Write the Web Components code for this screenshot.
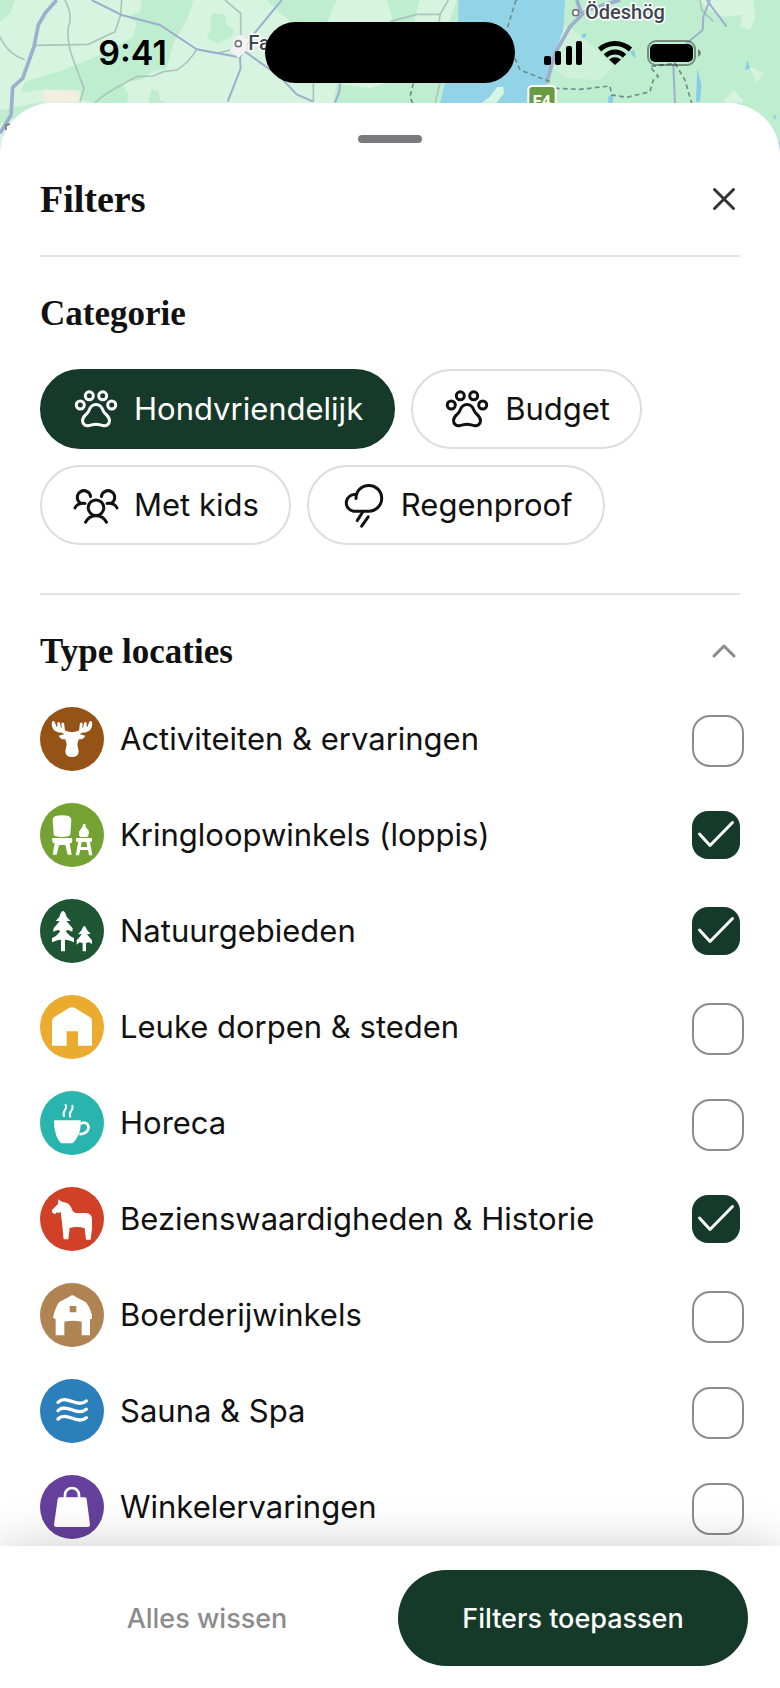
<!DOCTYPE html>
<html lang="nl">
<head>
<meta charset="utf-8">
<meta name="viewport" content="width=device-width, initial-scale=1">
<title>Filters</title>
<style>
    :root {
        --primary: #153a29;
        --text: #111;
        --muted: #8c8c8c;
        --line: #e4e4e4;
        --content-font: Inter, "Liberation Sans", sans-serif;
        --title-font: "Liberation Serif", serif;
    }
    body {
        margin: 0;
        font-family: var(--content-font);
        color: var(--text);
        background: #fff;
    }
</style>
</head>
<body>
<filter-screen></filter-screen>

<script>
const CHIP_ICONS = {
    paw: `<circle cx="17.3" cy="10.8" r="4"/><circle cx="30.7" cy="10.8" r="4"/>
        <circle cx="8.3" cy="20" r="4"/><circle cx="39.7" cy="20" r="4"/>
        <path d="M24 19.5C19.5 19.5 17.9 22.5 16.7 26C15.6 29.2 10.5 30.8 10.5 35.6C10.5 39.3 13.6 41.2 17 40.5C20 39.8 22 39.2 24 39.2C26 39.2 28 39.8 31 40.5C34.4 41.2 37.5 39.3 37.5 35.6C37.5 30.8 32.4 29.2 31.3 26C30.1 22.5 28.5 19.5 24 19.5Z"/>`,
    kids: `<circle cx="24" cy="26.7" r="7.8"/>
        <path d="M13.5 41.2C15.5 37.3 19.4 34.8 24 34.8C28.6 34.8 32.5 37.3 34.5 41.2"/>
        <path d="M18.6 15.5A6.7 6.7 0 1 0 8.3 22"/><path d="M13 22.4C8 22 4.5 23.6 3 27"/>
        <path d="M29.4 15.5A6.7 6.7 0 1 1 39.7 22"/><path d="M35 22.4C40 22 43.5 23.6 45 27"/>`,
    rain: `<path d="M17 17.5C17 9.5 23 4.4 29.8 4.4A12.8 12.8 0 0 1 29.8 30.2H14.4A8.4 8.4 0 1 1 17 13.6"/>
        <path d="M23.4 31.5L18.2 39.6"/><path d="M29.2 35.8L22.6 45.2"/>`
};

const PLACE_ICONS = {
    moose: `<path d="M36 45Q40 40 44 44L49 58Q51 62 52 57L52 48Q56 42 60 48L63 62Q65 66 65 60L64 50Q68 43 72 49L74 62Q73 69 78 72Q88 75 96 75Q104 75 114 72Q119 69 118 62L120 49Q124 43 128 50L127 60Q127 66 129 62L132 48Q136 42 140 48L140 57Q141 62 143 58L148 44Q152 40 156 45Q159 62 148 71Q139 77 127 77L119 81Q128 84 136 86Q131 98 116 97L112 112Q113 122 116 131Q116 150 96 150Q76 150 76 131Q79 122 80 112L76 97Q61 98 56 86Q64 84 73 81L65 77Q53 77 44 71Q33 62 36 45Z"/>`,
    chair: `<path d="M38 50Q38 37 66 37Q94 37 94 50L91 94Q90 102 66 102Q42 102 41 94Z"/>
        <path d="M38 105H95Q98 106 96 119L89 121L95 155H83L76 126H57L50 155H38L44 121L38 119Q34 107 38 105Z"/>
        <path d="M130 62L137 64L137 72Q147 80 147 89Q146 98 142 102H121Q114 95 117 86Q122 78 127 72Z"/>
        <path fill-rule="evenodd" d="M108 105H156V116H150L157 157H147L144 141H121L117 157H107L115 116H108ZM125 117L123 132H142L139 117Z"/>`,
    trees: `<path d="M69 36Q76 38 80 54L92 66L79 66L98 88L97 98L84 93L77 96Q88 112 102 117V130L86 124L75 122V157H63V122L52 124L36 130V117Q50 112 61 96L54 93L39 98L41 88L59 66L47 66L58 54Q62 38 69 36Z"/>
        <path d="M133 80Q138 83 141 93L152 105L141 105Q148 116 156 124V135L147 130L138 132V157H128V132L119 130L110 137V124Q119 116 125 105L114 106L125 93Q128 83 133 80Z"/>`,
    house: `<path d="M36 152V78Q36 72 42 67L87 39Q96 34 105 39L150 67Q156 71 156 78V152H114V109H80V152Z"/>`,
    cup: `<path d="M44 88H122Q124 114 114 135Q107 149 98 157H63Q54 147 49 134Q41 112 42 90Z"/>
        <path fill="none" stroke="#fff" stroke-width="8" d="M121 99Q132 91 142 99Q151 112 138 124Q131 130 118 129"/>
        <path fill="none" stroke="#fff" stroke-width="6" stroke-linecap="round" d="M77 42C84 56 64 60 72 75M97 44C103 58 83 62 91 77"/>`,
    horse: `<path d="M55 37L66 44Q88 46 94 62Q98 76 108 78H138Q155 79 156 96V125L152 158H138L134 124Q112 116 89 123L85 157H71L65 98L62 74Q56 80 50 76L45 82L37 77L36 69L54 51Z"/>`,
    barn: `<path fill-rule="evenodd" d="M97 37Q101 37 106 41L138 58Q151 74 156 96V107L150 109V157H125V116Q98 110 73 116V157H47V109L39 104Q46 74 57 58L88 41Q93 37 97 37ZM89 69V88H109V69Z"/>`,
    waves: `<path fill="none" stroke="#fff" stroke-width="10" stroke-linecap="round" d="M54 70C66 58 80 62 95 67C111 74 128 75 139 66M54 95C66 83 80 87 95 92C111 99 128 100 139 91M54 120C66 108 80 112 95 117C111 124 128 125 139 116"/>`,
    bag: `<path d="M59 67H134Q140 67 140 73L150 149Q150 156 143 156H49Q42 156 42 149L53 73Q53 67 59 67Z"/>
        <path fill="none" stroke="#fff" stroke-width="8" d="M75 70V60A21 21 0 0 1 117 60V70"/>`
};

class AreaMap extends HTMLElement {
    constructor() {
        super();
        this.attachShadow({ mode: 'open' });
    }

    connectedCallback() {
        this.shadowRoot.innerHTML = `
            <style>
                :host {
                    display: block;
                    overflow: hidden;
                    background: #bfedcf;
                }
                svg {
                    display: block;
                    width: 100%;
                    height: 100%;
                }
                text {
                    font-family: Roboto, sans-serif;
                    font-weight: 500;
                    font-size: 60px;
                    fill: #3f4650;
                    stroke: #fff;
                    stroke-width: 9px;
                    paint-order: stroke;
                }
                .shield {
                    font-size: 48px;
                    font-weight: 700;
                    fill: #fff;
                    stroke: none;
                }
                .road {
                    fill: none;
                    stroke: #9dafcc;
                    stroke-width: 6px;
                }
                .main {
                    stroke-width: 11px;
                }
                .minor {
                    fill: none;
                    stroke: #a9c5bd;
                    stroke-width: 5px;
                }
                .border {
                    fill: none;
                    stroke: #6f8f86;
                    stroke-width: 5px;
                    stroke-dasharray: 14 10;
                }
            </style>
            <svg viewBox="0 0 2340 480" preserveAspectRatio="xMidYMin slice" aria-hidden="true">
                <path fill="#d6f4e0" d="M0 0H1370L1320 150L1290 320L0 480Z"/>
                <g fill="#bfedcf">
                    <path d="M425 0H580L565 50L520 130L500 205L455 215L425 240L365 245L385 285L380 310H290L245 300L240 270L130 268L60 278L75 245L190 210L300 165L400 110L410 70L385 50L420 35Z"/>
                    <path d="M455 265L475 275L480 300L500 310H445Z"/>
                    <path d="M640 38L675 45L680 75L705 90L695 110L650 130L620 115L635 85L630 60Z"/>
                    <path d="M0 0H45L30 40L0 65Z"/>
                    <path d="M0 330L130 305L60 350L0 370Z"/>
                    <path d="M800 0H1010L980 70H880L840 40Z"/>
                    <path d="M1010 250L1110 265L1170 245L1310 250L1300 310H1000Z"/>
                    <path d="M1160 0L1260 0L1240 70L1180 65Z"/>
                </g>
                <path fill="#f2eee0" d="M135 270L230 272L240 305L150 308L128 300Z"/>
                <path fill="#cdf2d9" d="M1690 75L1720 90L1790 150L1840 200L1800 240L1700 235L1650 200Z"/>
                <path fill="#d6f4e0" d="M2100 0H2340V0L2260 0L2265 55L2250 90L2220 80L2225 45L2170 50L2130 30ZM2250 200L2290 220L2270 250ZM2170 305L2200 270L2230 300L2210 330Z"/>
                <path fill="#92d3e8" d="M1375 0H1695L1690 90L1660 170L1640 250L1590 310H1320L1340 230L1350 130L1375 60Z"/>
                <path fill="#d6f4e0" d="M1510 260L1490 262L1470 290L1445 308H1490L1512 280Z"/>
                <g fill="#86cbe8">
                    <path d="M1745 105L1758 98V110L1748 115ZM1890 155L1902 150L1908 175L1896 165ZM2092 205L2104 255L2100 305H2088ZM2235 210L2242 180L2250 205ZM1825 290L1840 280L1838 310H1825ZM2210 305L2260 335L2340 430V450L2290 375ZM2320 350L2330 343L2324 360Z"/>
                </g>
                <path class="minor" d="M195 0Q220 50 205 80Q200 130 220 180L252 265L240 305M365 0L362 45L345 95L265 133L105 136M0 110Q20 160 75 180M285 308Q320 275 410 230L460 228L490 215L530 210Q565 190 590 148M675 0L722 40V105M690 150L650 160L600 150M940 250V305M2100 0L2105 30L2140 65M1170 65L1250 43H1320L1345 0M1320 43L1315 90M1320 250L1305 310"/>
                <path class="road" d="M275 0L365 45L480 75L590 148L720 172L742 130L765 98L845 0M720 172L722 205L683 305M735 155L840 230L890 283L940 305M1020 250L1018 275L1005 308M2025 310L2020 195L2060 130L2108 90L2110 50L2130 0M2120 0L2180 80"/>
                <path class="road main" d="M170 0L135 40L115 75L102 140L68 235L38 262L33 345L18 370L0 400M1860 0L1760 30L1710 80L1665 160L1640 250M1730 0L1745 40"/>
                <path class="border" d="M1548 0L1520 90M1545 175L1560 210L1650 245M1240 250L1230 290L1238 310M1665 265L1740 268L1830 258L1835 285L1880 292L1950 275L1960 240L1975 230L1950 200L2025 190L2055 240L2075 310"/>
                <path fill="#f3f1f3" d="M720 105L745 120L740 150L715 175L693 150L700 120Z"/>
                <g fill="#fff" stroke="#777" stroke-width="5">
                    <circle cx="715" cy="131" r="9"/>
                    <circle cx="1727" cy="38" r="9"/>
                    <circle cx="26" cy="382" r="9"/>
                </g>
                <text x="745" y="151">Fa</text>
                <text x="1755" y="57">Ödeshög</text>
                <rect x="1585" y="258" width="82" height="90" rx="12" fill="#699b41" stroke="#fff" stroke-width="6"/>
                <text class="shield" x="1598" y="320">E4</text>
            </svg>
        `;
    }
}

class StatusBar extends HTMLElement {
    constructor() {
        super();
        this.attachShadow({ mode: 'open' });
    }

    connectedCallback() {
        this.shadowRoot.innerHTML = `
            <style>
                :host {
                    display: grid;
                    grid-template-columns: 1fr 250px 1fr;
                    align-items: center;
                    padding: 22px 0 20px;
                    color: #000;
                }
                time {
                    justify-self: center;
                    font-size: 34px;
                    line-height: 40px;
                    font-weight: 600;
                }
                .island {
                    height: 61px;
                    border-radius: 31px;
                    background: #000;
                }
                .signals {
                    display: flex;
                    align-items: center;
                    gap: 14px;
                    margin-left: 28px;
                }
                svg {
                    display: block;
                }
                .arc {
                    fill: none;
                    stroke: #000;
                    stroke-width: 5px;
                }
            </style>
            <time>9:41</time>
            <div class="island"></div>
            <div class="signals">
                <svg width="40" height="24" viewBox="0 0 40 24" aria-hidden="true">
                    <rect x="1" y="15" width="7" height="9" rx="2"/>
                    <rect x="12" y="10" width="6" height="14" rx="2"/>
                    <rect x="23" y="5" width="6" height="19" rx="2"/>
                    <rect x="33" y="0" width="6" height="24" rx="2"/>
                </svg>
                <svg width="36" height="24" viewBox="0 0 36 24" aria-hidden="true">
                    <path class="arc" d="M2.5 8.5Q9.5 2.5 18 2.5T33.5 8.5"/>
                    <path class="arc" d="M8.5 15Q12.5 11 18 11T27.5 15"/>
                    <path d="M12 18.5Q18 14 24 18.5L18 24Z"/>
                </svg>
                <svg width="54" height="26" viewBox="0 0 54 26" aria-hidden="true">
                    <rect x="1" y="1" width="47" height="24" rx="8" fill="none" stroke="#000" stroke-opacity=".4" stroke-width="2"/>
                    <rect x="3" y="4" width="43" height="18" rx="5"/>
                    <path fill-opacity=".45" d="M51 9Q54 11 54 13Q54 15 51 17Z"/>
                </svg>
            </div>
        `;
    }
}

class FilterSection extends HTMLElement {
    constructor() {
        super();
        this.attachShadow({ mode: 'open' });
    }

    connectedCallback() {
        const toggle = this.hasAttribute('collapsible') ? `
            <button type="button" aria-label="Inklappen" aria-expanded="true">
                <svg width="32" height="32" viewBox="0 0 32 32" aria-hidden="true"><path d="M6 20L16 10L26 20"/></svg>
            </button>` : '';
        this.shadowRoot.innerHTML = `
            <style>
                :host {
                    display: block;
                    padding: 36px 0 48px;
                    border-bottom: 2px solid var(--line);
                }
                :host(:last-of-type) {
                    border-bottom: 0;
                    padding-bottom: 0;
                }
                header {
                    display: flex;
                    align-items: center;
                    justify-content: space-between;
                    margin-bottom: 34px;
                }
                h2 {
                    margin: 0;
                    font-family: var(--title-font);
                    font-size: 35px;
                    line-height: 42px;
                }
                button {
                    padding: 0;
                    border: 0;
                    background: none;
                    cursor: pointer;
                }
                svg {
                    display: block;
                    fill: none;
                    stroke: var(--muted);
                    stroke-width: 3px;
                    stroke-linecap: round;
                    stroke-linejoin: round;
                }
            </style>
            <header>
                <h2>${this.getAttribute('heading')}</h2>
                ${toggle}
            </header>
            <slot></slot>
        `;
        const button = this.shadowRoot.querySelector('button');
        if (button) {
            button.addEventListener('click', () => {
                const open = button.getAttribute('aria-expanded') === 'true';
                this.shadowRoot.querySelector('slot').style.display = open ? 'none' : '';
                button.setAttribute('aria-expanded', !open);
            });
        }
    }
}

class FilterChip extends HTMLElement {
    constructor() {
        super();
        this.attachShadow({ mode: 'open' });
    }

    connectedCallback() {
        this.shadowRoot.innerHTML = `
            <style>
                :host {
                    display: block;
                }
                button {
                    display: flex;
                    align-items: center;
                    gap: 14px;
                    height: 80px;
                    padding: 0 30px;
                    border: 2px solid #ddd;
                    border-radius: 40px;
                    background: #fff;
                    color: var(--text);
                    font-family: inherit;
                    font-size: 31px;
                    line-height: 40px;
                    white-space: nowrap;
                    cursor: pointer;
                }
                button[aria-pressed="true"] {
                    background: var(--primary);
                    border-color: var(--primary);
                    color: #fff;
                }
                svg {
                    display: block;
                    fill: none;
                    stroke: currentColor;
                    stroke-width: 3px;
                    stroke-linecap: round;
                    stroke-linejoin: round;
                }
            </style>
            <button type="button" aria-pressed="${this.hasAttribute('selected')}">
                <svg width="48" height="48" viewBox="0 0 48 48" aria-hidden="true">${CHIP_ICONS[this.getAttribute('icon')]}</svg>
                <span><slot></slot></span>
            </button>
        `;
        const button = this.shadowRoot.querySelector('button');
        button.addEventListener('click', () => {
            button.setAttribute('aria-pressed', button.getAttribute('aria-pressed') !== 'true');
        });
    }
}

class PlaceOption extends HTMLElement {
    constructor() {
        super();
        this.attachShadow({ mode: 'open' });
    }

    connectedCallback() {
        this.shadowRoot.innerHTML = `
            <style>
                :host {
                    display: block;
                }
                label {
                    display: flex;
                    align-items: center;
                    gap: 16px;
                    font-size: 31px;
                    line-height: 40px;
                    cursor: pointer;
                }
                .icon {
                    flex: none;
                    border-radius: 50%;
                    background: ${this.getAttribute('color')};
                    fill: #fff;
                }
                .name {
                    flex: 1;
                }
                .box {
                    display: grid;
                    grid-template: 48px / 48px;
                }
                .box > * {
                    grid-area: 1 / 1;
                }
                /* the border comes on top of the 48px box */
                input {
                    appearance: none;
                    box-sizing: content-box;
                    width: 48px;
                    height: 48px;
                    margin: 0;
                    border: 2px solid var(--muted);
                    border-radius: 18px;
                }
                input:checked {
                    border: 0;
                    border-radius: 16px;
                    background: var(--primary);
                }
                .tick {
                    display: none;
                    fill: none;
                    stroke: #fff;
                    stroke-width: 3px;
                    stroke-linecap: round;
                    stroke-linejoin: round;
                    pointer-events: none;
                    z-index: 1;
                }
                input:checked + .tick {
                    display: block;
                }
            </style>
            <label for="option">
                <svg class="icon" width="64" height="64" viewBox="0 0 192 192" aria-hidden="true">${PLACE_ICONS[this.getAttribute('icon')]}</svg>
                <span class="name"><slot></slot></span>
                <span class="box">
                    <input id="option" type="checkbox" ${this.hasAttribute('checked') ? 'checked' : ''}>
                    <svg class="tick" width="48" height="48" viewBox="0 0 48 48" aria-hidden="true"><path d="M7.5 23L18 34.5L40.5 11.5"/></svg>
                </span>
            </label>
        `;
    }
}

class FilterSheet extends HTMLElement {
    constructor() {
        super();
        this.attachShadow({ mode: 'open' });
    }

    connectedCallback() {
        this.shadowRoot.innerHTML = `
            <style>
                :host {
                    display: block;
                    padding: 32px 40px 7px;
                    border-radius: 52px 52px 0 0;
                    background: #fff;
                }
                .handle {
                    width: 64px;
                    height: 8px;
                    margin: 0 auto;
                    border-radius: 4px;
                    background: #7b797e;
                }
                header {
                    display: flex;
                    align-items: center;
                    justify-content: space-between;
                    padding: 32px 0;
                    border-bottom: 2px solid var(--line);
                }
                h1 {
                    margin: 0;
                    font-family: var(--title-font);
                    font-size: 38px;
                    line-height: 48px;
                }
                button {
                    padding: 0;
                    border: 0;
                    background: none;
                    cursor: pointer;
                }
                svg {
                    display: block;
                    fill: none;
                    stroke: #333;
                    stroke-width: 3px;
                    stroke-linecap: round;
                }
            </style>
            <div class="handle"></div>
            <header>
                <h1>Filters</h1>
                <button type="button" aria-label="Sluiten">
                    <svg width="32" height="32" viewBox="0 0 32 32" aria-hidden="true"><path d="M6.5 6.5L25.5 25.5M25.5 6.5L6.5 25.5"/></svg>
                </button>
            </header>
            <slot></slot>
        `;
    }
}

class ActionBar extends HTMLElement {
    constructor() {
        super();
        this.attachShadow({ mode: 'open' });
    }

    connectedCallback() {
        this.shadowRoot.innerHTML = `
            <style>
                :host {
                    display: grid;
                    grid-template-columns: 1fr 1fr;
                    gap: 16px;
                    padding: 24px 32px 22px;
                    background: #fff;
                    box-shadow: 0 0 48px rgba(0, 0, 0, 0.2);
                }
                button {
                    height: 96px;
                    padding: 0;
                    border: 0;
                    border-radius: 48px;
                    background: none;
                    color: var(--muted);
                    font-family: inherit;
                    font-size: 27px;
                    font-weight: 500;
                    cursor: pointer;
                }
                .apply {
                    background: var(--primary);
                    color: #fff;
                }
            </style>
            <button type="button">Alles wissen</button>
            <button type="button" class="apply">Filters toepassen</button>
        `;
    }
}

class FilterScreen extends HTMLElement {
    constructor() {
        super();
        this.attachShadow({ mode: 'open' });
    }

    connectedCallback() {
        this.shadowRoot.innerHTML = `
            <style>
                :host {
                    display: flex;
                    flex-direction: column;
                    min-height: 100vh;
                    position: relative;
                }
                /* the map lies behind the status bar and the sheet's corners */
                area-map {
                    position: absolute;
                    inset: 0 0 auto;
                    height: 160px;
                    z-index: -1;
                }
                filter-sheet {
                    flex: 1;
                }
                action-bar {
                    position: sticky;
                    bottom: 0;
                    z-index: 2;
                }
                .chips {
                    display: flex;
                    flex-wrap: wrap;
                    gap: 16px;
                }
                .options {
                    display: grid;
                    gap: 32px;
                }
            </style>
            <area-map></area-map>
            <status-bar></status-bar>
            <filter-sheet>
                <filter-section heading="Categorie">
                    <div class="chips">
                        <filter-chip icon="paw" selected>Hondvriendelijk</filter-chip>
                        <filter-chip icon="paw">Budget</filter-chip>
                        <filter-chip icon="kids">Met kids</filter-chip>
                        <filter-chip icon="rain">Regenproof</filter-chip>
                    </div>
                </filter-section>
                <filter-section heading="Type locaties" collapsible>
                    <div class="options">
                        <place-option icon="moose" color="#955317">Activiteiten &amp; ervaringen</place-option>
                        <place-option icon="chair" color="#74a233" checked>Kringloopwinkels (loppis)</place-option>
                        <place-option icon="trees" color="#1e5532" checked>Natuurgebieden</place-option>
                        <place-option icon="house" color="#ebab2f">Leuke dorpen &amp; steden</place-option>
                        <place-option icon="cup" color="#29b5ad">Horeca</place-option>
                        <place-option icon="horse" color="#d14128" checked>Bezienswaardigheden &amp; Historie</place-option>
                        <place-option icon="barn" color="#af8352">Boerderijwinkels</place-option>
                        <place-option icon="waves" color="#2b7fba">Sauna &amp; Spa</place-option>
                        <place-option icon="bag" color="#65409c">Winkelervaringen</place-option>
                    </div>
                </filter-section>
            </filter-sheet>
            <action-bar></action-bar>
        `;
    }
}

customElements.define("area-map", AreaMap);
customElements.define("status-bar", StatusBar);
customElements.define("filter-section", FilterSection);
customElements.define("filter-chip", FilterChip);
customElements.define("place-option", PlaceOption);
customElements.define("filter-sheet", FilterSheet);
customElements.define("action-bar", ActionBar);
customElements.define("filter-screen", FilterScreen);
</script>
</body>
</html>
